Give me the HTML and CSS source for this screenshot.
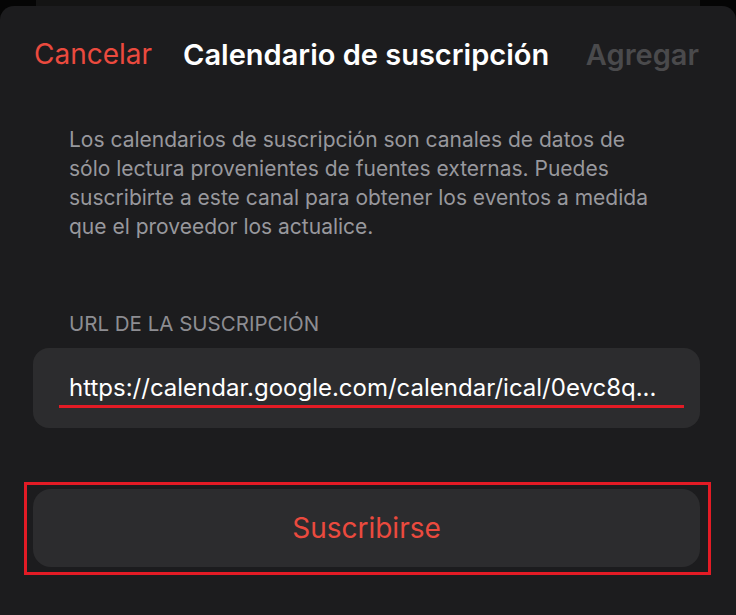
FILE: index.html
```html
<!DOCTYPE html>
<html lang="es">
<head>
<meta charset="utf-8">
<link rel="stylesheet" href="styles.css">
</head>
<body>
<div class="backsheet"></div>
<div class="sheet">
  <header class="nav">
    <span class="nav-cancel">Cancelar</span>
    <span class="nav-title">Calendario de suscripción</span>
    <span class="nav-add">Agregar</span>
  </header>
  <p class="desc">Los calendarios de suscripción son canales de datos de<br>sólo lectura provenientes de fuentes externas. Puedes<br>suscribirte a este canal para obtener los eventos a medida<br>que el proveedor los actualice.</p>
  <div class="label">URL DE LA SUSCRIPCIÓN</div>
  <div class="field">
    <span class="url">https://calendar.google.com/calendar/ical/0evc8q...</span>
  </div>
  <div class="btn-outline">
    <div class="btn">Suscribirse</div>
  </div>
</div>
</body>
</html>
```
FILE: styles.css
```css
* { box-sizing: border-box; }
html, body {
  margin: 0;
  padding: 0;
  background: #050505;
  width: 736px;
  height: 615px;
  overflow: hidden;
  font-family: Inter, "Noto Sans", sans-serif;
}
.backsheet {
  height: 6px;
  margin: 0 36px;
  background: #141414;
}
.sheet {
  background: #1c1c1e;
  border-radius: 14px 14px 0 0;
  height: 609px;
  padding: 0 36px 0 33px;
}
.nav {
  display: flex;
  align-items: center;
  height: 96px;
  padding: 0 1px 0 1px;
}
.nav-cancel {
  color: #eb4a3e;
  font-size: 28px;
}
.nav-title {
  margin-left: 31px;
  color: #ffffff;
  font-size: 29px;
  font-weight: 600;
}
.nav-add {
  margin-left: auto;
  color: #4a4a4c;
  font-size: 29px;
  font-weight: 600;
}
.desc {
  margin: 23px 0 0 36px;
  width: 630px;
  white-space: nowrap;
  color: #98989d;
  font-size: 21px;
  line-height: 29px;
}
.label {
  margin: 72px 0 0 36px;
  color: #8d8d92;
  font-size: 20.5px;
  line-height: 22px;
}
.field {
  margin-top: 13px;
  height: 80px;
  background: #2c2c2e;
  border-radius: 16px;
  padding: 0 14px 0 26px;
  display: flex;
  align-items: center;
}
.url {
  color: #ffffff;
  font-size: 24px;
  padding: 0 0 3px 10px;
  border-bottom: 3px solid #e31b25;
  width: 625px;
  white-space: nowrap;
  overflow: hidden;
  margin-top: 4px;
}
.btn-outline {
  margin: 54px -11px 0 -9px;
  border: 3px solid #e31b25;
  padding: 4px 8px 5px 6px;
}
.btn {
  height: 78px;
  background: #2c2c2e;
  border-radius: 18px;
  display: flex;
  align-items: center;
  justify-content: center;
  color: #eb4a3e;
  font-size: 28px;
}
```
